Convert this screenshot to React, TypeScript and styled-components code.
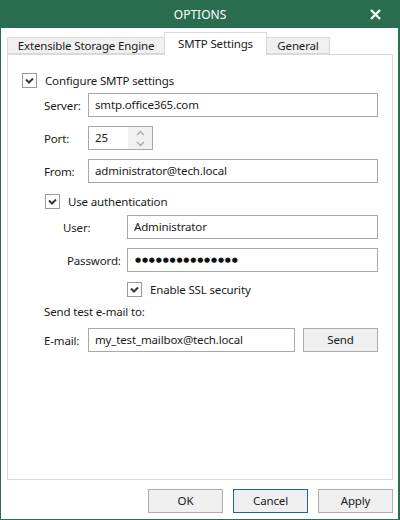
import React from "react";
import styled, { createGlobalStyle } from "styled-components";

const GlobalStyle = createGlobalStyle`
  html, body {
    margin: 0;
    padding: 0;
    background: #ffffff;
  }
  * {
    box-sizing: border-box;
  }
`;

const Window = styled.div`
  width: 400px;
  height: 520px;
  display: flex;
  flex-direction: column;
  border: 1px solid #2b6e4f;
  border-top: none;
  border-right-width: 2px;
  background: #ffffff;
  font-family: "Segoe UI", "Noto Sans", sans-serif;
  font-size: 11.5px;
  letter-spacing: -0.15px;
  color: #1a1a1a;
`;

const TitleBar = styled.div`
  height: 28px;
  margin: 0 -2px 0 -1px;
  background: #2b6e4f;
  color: #ffffff;
  display: grid;
  grid-template-columns: 1fr auto 1fr;
  align-items: center;
`;

const Title = styled.div`
  grid-column: 2;
  font-size: 12px;
  letter-spacing: 0;
`;

const CloseButton = styled.div`
  grid-column: 3;
  justify-self: end;
  width: 28px;
  height: 28px;
  margin-right: 11px;
  display: flex;
  align-items: center;
  justify-content: center;
`;

const Body = styled.div`
  flex: 1;
  display: flex;
  flex-direction: column;
  padding: 4px 5px 6px 6px;
`;

const TabStrip = styled.div`
  height: 22px;
  display: flex;
  align-items: flex-end;
  position: relative;
  z-index: 1;
`;

const Tab = styled.div<{ $active?: boolean; $width: number }>`
  width: ${(p) => p.$width}px;
  height: ${(p) => (p.$active ? 23 : 17)}px;
  margin-bottom: ${(p) => (p.$active ? -1 : 0)}px;
  display: flex;
  align-items: center;
  justify-content: center;
  padding-bottom: ${(p) => (p.$active ? 2 : 0)}px;
  background: ${(p) => (p.$active ? "#ffffff" : "#f0f0f0")};
  border: 1px solid #d9d9d9;
  border-bottom: ${(p) => (p.$active ? "none" : "1px solid #d9d9d9")};
  margin-left: ${(p) => (p.$active ? -1 : 0)}px;
  margin-right: ${(p) => (p.$active ? -1 : 0)}px;
  position: relative;
  z-index: ${(p) => (p.$active ? 2 : 1)};
  color: #1a1a1a;
  white-space: nowrap;
`;

const Panel = styled.div`
  height: 426px;
  border: 1px solid #d9d9d9;
  background: #ffffff;
  padding: 0 14px;
  display: flex;
  flex-direction: column;
`;

const Row = styled.div<{ $top: number; $indent?: number; $tall?: boolean }>`
  margin-top: ${(p) => p.$top}px;
  padding-left: ${(p) => p.$indent ?? 0}px;
  height: ${(p) => (p.$tall ? 24 : 15)}px;
  display: flex;
  align-items: center;
`;

const CheckLabel = styled.label`
  display: flex;
  align-items: center;
  gap: 8px;
  white-space: nowrap;
`;

const Box = styled.span`
  width: 15px;
  height: 15px;
  border: 1px solid #9a9a9a;
  background: #ffffff;
  display: flex;
  align-items: center;
  justify-content: center;
`;

const FieldLabel = styled.span<{ $width: number; $shift?: number }>`
  width: ${(p) => p.$width}px;
  padding-left: ${(p) => p.$shift ?? 0}px;
  flex-shrink: 0;
  white-space: nowrap;
`;

const TextInput = styled.input<{ $width?: number }>`
  height: 24px;
  width: ${(p) => (p.$width ? `${p.$width}px` : "auto")};
  flex: ${(p) => (p.$width ? "none" : "1")};
  min-width: 0;
  border: 1px solid #a8a8a8;
  padding: 0 6px 1px;
  font: inherit;
  letter-spacing: inherit;
  color: #1a1a1a;
  background: #ffffff;
  outline: none;
`;

const Dots = styled.input`
  height: 24px;
  flex: 1;
  min-width: 0;
  border: 1px solid #a8a8a8;
  padding: 0 6px 1px 7px;
  font-family: "DejaVu Sans", sans-serif;
  font-size: 7px;
  letter-spacing: 0.8px;
  color: #111;
  outline: none;
`;

const Spin = styled.div`
  width: 65px;
  height: 24px;
  border: 1px solid #a8a8a8;
  display: flex;
`;

const SpinValue = styled.input`
  flex: 1;
  min-width: 0;
  border: none;
  padding: 0 6px 1px;
  font: inherit;
  letter-spacing: inherit;
  color: #1a1a1a;
  outline: none;
`;

const SpinArrows = styled.div`
  width: 24px;
  background: #f0f0f0;
  display: flex;
  flex-direction: column;
`;

const SpinArrow = styled.div`
  flex: 1;
  display: flex;
  align-items: center;
  justify-content: center;
`;

const Caption = styled.div<{ $top: number }>`
  margin-top: ${(p) => p.$top}px;
  padding-left: 22px;
  height: 16px;
  line-height: 16px;
`;

const Button = styled.button<{ $default?: boolean; $width?: number }>`
  width: ${(p) => p.$width ?? 75}px;
  height: 24px;
  flex-shrink: 0;
  border: 1px solid ${(p) => (p.$default ? "#1b64a8" : "#adadad")};
  background: #efefef;
  font: inherit;
  letter-spacing: inherit;
  color: #1a1a1a;
  padding: 0 0 1px;
`;

const SendButton = styled(Button)`
  margin-left: 8px;
`;

const Footer = styled.div`
  margin-top: 9px;
  display: flex;
  justify-content: flex-end;
  gap: 10px;
`;

const CheckMark = () => (
  <svg width="11" height="11" viewBox="0 0 11 11">
    <polyline points="2,4.5 5,7.5 9,3.5" fill="none" stroke="#3a3a3a" strokeWidth="2" />
  </svg>
);

const Check = ({ children }: { children: React.ReactNode }) => (
  <CheckLabel>
    <Box>
      <CheckMark />
    </Box>
    {children}
  </CheckLabel>
);

const Chevron = ({ up }: { up?: boolean }) => (
  <svg width="9" height="6" viewBox="0 0 9 6">
    <polyline
      points={up ? "1,5 4.5,1.5 8,5" : "1,1 4.5,4.5 8,1"}
      fill="none"
      stroke="#a9a9a9"
      strokeWidth="1.4"
    />
  </svg>
);

export default function App() {
  return (
    <>
      <GlobalStyle />
      <Window>
        <TitleBar>
          <Title>OPTIONS</Title>
          <CloseButton>
            <svg width="11" height="11" viewBox="0 0 11 11">
              <path d="M1 1L10 10M10 1L1 10" stroke="#ffffff" strokeWidth="2.4" />
            </svg>
          </CloseButton>
        </TitleBar>
        <Body>
          <TabStrip>
            <Tab $width={158}>Extensible Storage Engine</Tab>
            <Tab $width={103} $active>
              SMTP Settings
            </Tab>
            <Tab $width={64}>General</Tab>
          </TabStrip>
          <Panel>
            <Row $top={18}>
              <Check>Configure SMTP settings</Check>
            </Row>
            <Row $top={5} $indent={22} $tall>
              <FieldLabel $width={44}>Server:</FieldLabel>
              <TextInput defaultValue="smtp.office365.com" />
            </Row>
            <Row $top={9} $indent={22} $tall>
              <FieldLabel $width={44}>Port:</FieldLabel>
              <Spin>
                <SpinValue defaultValue="25" />
                <SpinArrows>
                  <SpinArrow>
                    <Chevron up />
                  </SpinArrow>
                  <SpinArrow>
                    <Chevron />
                  </SpinArrow>
                </SpinArrows>
              </Spin>
            </Row>
            <Row $top={9} $indent={22} $tall>
              <FieldLabel $width={44}>From:</FieldLabel>
              <TextInput defaultValue="administrator@tech.local" />
            </Row>
            <Row $top={11} $indent={23}>
              <Check>Use authentication</Check>
            </Row>
            <Row $top={6} $indent={41} $tall>
              <FieldLabel $width={64}>User:</FieldLabel>
              <TextInput defaultValue="Administrator" />
            </Row>
            <Row $top={9} $indent={41} $tall>
              <FieldLabel $width={64} $shift={4}>
                Password:
              </FieldLabel>
              <Dots defaultValue={"●".repeat(15)} />
            </Row>
            <Row $top={10} $indent={105}>
              <Check>Enable SSL security</Check>
            </Row>
            <Caption $top={7}>Send test e-mail to:</Caption>
            <Row $top={8} $indent={22} $tall>
              <FieldLabel $width={44}>E-mail:</FieldLabel>
              <TextInput $width={207} defaultValue="my_test_mailbox@tech.local" />
              <SendButton>Send</SendButton>
            </Row>
          </Panel>
          <Footer>
            <Button>OK</Button>
            <Button $default>Cancel</Button>
            <Button>Apply</Button>
          </Footer>
        </Body>
      </Window>
    </>
  );
}
